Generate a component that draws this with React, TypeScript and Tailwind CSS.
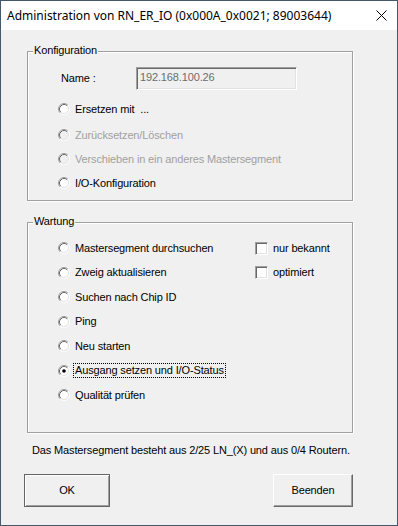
import React from "react";

function Radio({ checked = false, disabled = false }: { checked?: boolean; disabled?: boolean }) {
  return (
    <svg width="12" height="12" viewBox="0 0 12 12" className="shrink-0">
      <circle cx="6" cy="6" r="4.5" fill={disabled ? "#f0f0f0" : "#ffffff"} />
      <path d="M2.11 9.89 A5.5 5.5 0 0 1 9.89 2.11" fill="none" stroke="#a0a0a0" strokeWidth="1" />
      <path d="M9.89 2.11 A5.5 5.5 0 0 1 2.11 9.89" fill="none" stroke="#ffffff" strokeWidth="1" />
      <path d="M2.82 9.18 A4.5 4.5 0 0 1 9.18 2.82" fill="none" stroke="#696969" strokeWidth="1" />
      <path d="M9.18 2.82 A4.5 4.5 0 0 1 2.82 9.18" fill="none" stroke="#e3e3e3" strokeWidth="1" />
      {checked && <circle cx="6" cy="6" r="1.8" fill="#000" />}
    </svg>
  );
}

function Check() {
  return (
    <span className="w-[13px] h-[13px] shrink-0 bg-white border-t border-l border-t-[#a0a0a0] border-l-[#a0a0a0] border-b border-r border-b-white border-r-white shadow-[inset_1px_1px_0_#696969,inset_-1px_-1px_0_#e3e3e3]" />
  );
}

function RadioRow({
  label,
  checked,
  disabled,
  focus,
  h = "h-[24px]",
}: {
  label: string;
  checked?: boolean;
  disabled?: boolean;
  focus?: boolean;
  h?: string;
}) {
  return (
    <div className={`flex items-center ${h}`}>
      <Radio checked={checked} disabled={disabled} />
      <span
        className={`ml-[4px] px-[1px] leading-[13px] whitespace-pre ${
          disabled ? "text-[#a0a0a0]" : "text-black"
        } ${focus ? "outline outline-1 outline-dotted outline-black" : ""}`}
      >
        {label}
      </span>
    </div>
  );
}

export default function App() {
  return (
    <div className="w-[398px] h-[526px] bg-[#f0f0f0] border border-[#44596b] flex flex-col overflow-hidden font-['Liberation_Sans',Arial,sans-serif] text-[11px] tracking-[-0.14px] text-black">
      {/* Title bar */}
      <div className="h-[29px] bg-white flex items-center justify-between pl-[6px] pr-[10px] shrink-0">
        <span className="text-[12px] font-['Noto_Sans','Liberation_Sans',sans-serif] tracking-normal text-black whitespace-nowrap">
          Administration von RN_ER_IO (0x000A_0x0021; 89003644)
        </span>
        <svg width="11" height="11" viewBox="0 0 11 11">
          <path d="M0.5 0.5 L10.5 10.5 M10.5 0.5 L0.5 10.5" stroke="#000" strokeWidth="1" />
        </svg>
      </div>

      {/* Konfiguration */}
      <div className="relative ml-[26px] mt-[21px] w-[326px] h-[150px] border border-[#a0a0a0] shadow-[inset_1px_1px_0_#fff,1px_1px_0_#fff]">
        <span className="absolute left-[5px] top-[-8px] bg-[#f0f0f0] pl-[1px] pr-[1px] leading-[13px]">Konfiguration</span>
        <div className="flex items-center mt-[15px] pl-[33px]">
          <span className="w-[75px] leading-[13px]">Name :</span>
          <div className="w-[161px] h-[23px] bg-[#f0f0f0] border-t border-l border-t-[#a0a0a0] border-l-[#a0a0a0] border-b border-r border-b-white border-r-white shadow-[inset_1px_1px_0_#696969,inset_-1px_-1px_0_#e3e3e3] flex items-start pt-[3px] pl-[3px] text-[#6d6d6d] leading-[13px]">
            192.168.100.26
          </div>
        </div>
        <div className="flex flex-col pl-[30px] mt-[7px]">
          <RadioRow label="Ersetzen mit  ..." />
          <div className="h-[2px]" />
          <RadioRow label="Zurücksetzen/Löschen" disabled />
          <RadioRow label="Verschieben in ein anderes Mastersegment" disabled />
          <RadioRow label="I/O-Konfiguration" />
        </div>
      </div>

      {/* Wartung */}
      <div className="relative ml-[26px] mt-[21px] w-[326px] h-[211px] border border-[#a0a0a0] shadow-[inset_1px_1px_0_#fff,1px_1px_0_#fff]">
        <span className="absolute left-[5px] top-[-8px] bg-[#f0f0f0] pl-[1px] pr-[1px] leading-[13px]">Wartung</span>
        <div className="grid grid-cols-[197px_auto] pl-[30px] pt-[13px]">
          <RadioRow label="Mastersegment durchsuchen" h="h-[24.5px]" />
          <div className="flex items-center h-[24.5px]">
            <Check />
            <span className="ml-[5px] leading-[13px]">nur bekannt</span>
          </div>
          <RadioRow label="Zweig aktualisieren" h="h-[24.5px]" />
          <div className="flex items-center h-[24.5px]">
            <Check />
            <span className="ml-[5px] leading-[13px]">optimiert</span>
          </div>
          <div className="col-span-2">
            <RadioRow label="Suchen nach Chip ID" h="h-[24.5px]" />
            <RadioRow label="Ping" h="h-[24.5px]" />
            <RadioRow label="Neu starten" h="h-[24.5px]" />
            <RadioRow label="Ausgang setzen und I/O-Status" checked focus h="h-[24.5px]" />
            <RadioRow label="Qualität prüfen" h="h-[24.5px]" />
          </div>
        </div>
      </div>

      {/* Status */}
      <div className="ml-[31px] mt-[11px] h-[13px] leading-[13px] whitespace-nowrap">
        Das Mastersegment besteht aus 2/25 LN_(X) und aus 0/4 Routern.
      </div>

      {/* Buttons */}
      <div className="flex pl-[23px] mt-[17px]">
        <button className="w-[86px] h-[33px] bg-[#f0f0f0] border border-[#646464] shadow-[inset_1px_1px_0_#fff,inset_-1px_-1px_0_#a0a0a0] flex items-center justify-center text-[11px] leading-[13px]">
          OK
        </button>
        <button className="ml-[163px] w-[80px] h-[33px] bg-[#f0f0f0] border-t border-l border-t-white border-l-white border-b border-r border-b-[#696969] border-r-[#696969] shadow-[inset_-1px_-1px_0_#a0a0a0] flex items-center justify-center text-[11px] leading-[13px]">
          Beenden
        </button>
      </div>
    </div>
  );
}
